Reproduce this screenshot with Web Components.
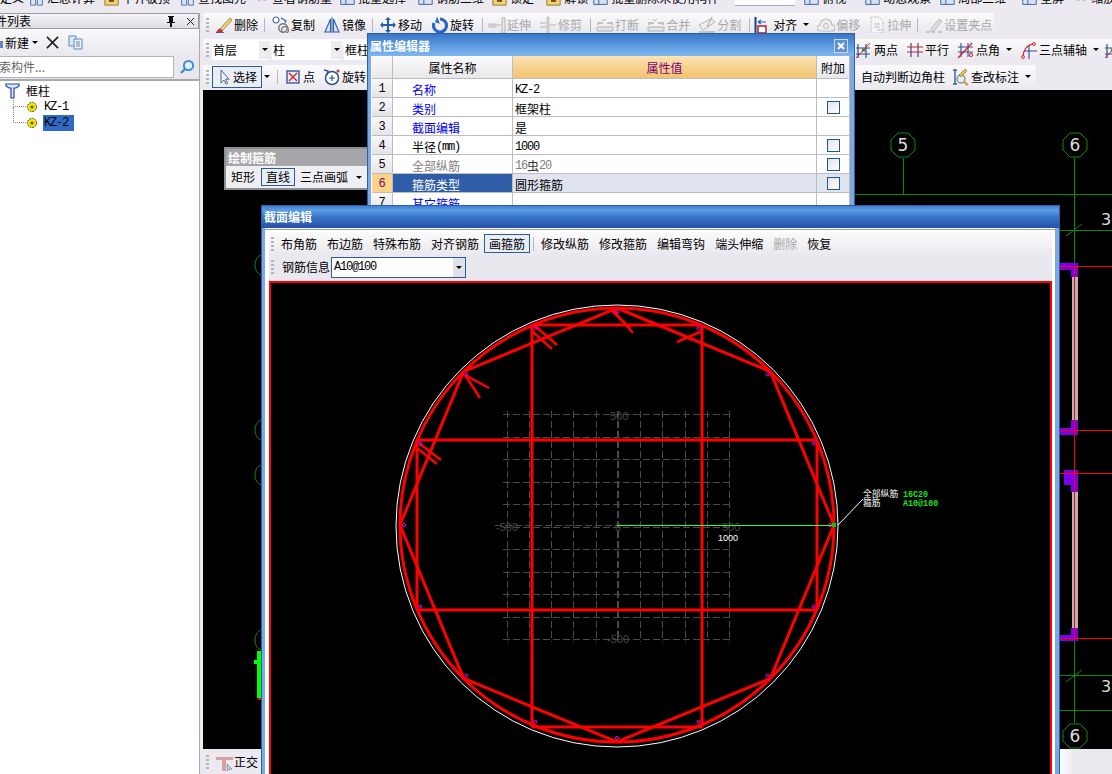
<!DOCTYPE html>
<html lang="zh">
<head>
<meta charset="utf-8">
<title>截面编辑</title>
<style>
  html, body { margin: 0; height: 100%; overflow: hidden; background: #eceaf0; }
  body { font: 12px/14px "Noto Sans CJK SC", "Liberation Sans", sans-serif; color: #000; }
</style>
</head>
<body>

<gl-app>
  <gl-menubar slot="menu"></gl-menubar>
  <gl-tree-panel slot="side"></gl-tree-panel>

  <gl-toolbar slot="tools" width="791" height="20" top="0" style="padding-top:3px">
    <gl-tool icon="brush" label="删除" style="margin-left:2px"></gl-tool>
    <gl-sep></gl-sep>
    <gl-tool icon="copy" label="复制" style="margin-left:2px"></gl-tool>
    <gl-tool icon="mirror" label="镜像" style="margin-left:5px"></gl-tool>
    <gl-sep></gl-sep>
    <gl-tool icon="move" label="移动" style="margin-left:1px"></gl-tool>
    <gl-tool icon="spin" label="旋转" style="margin-left:6px"></gl-tool>
    <gl-sep style="margin-left:6px"></gl-sep>
    <gl-tool icon="extend" label="延伸" disabled></gl-tool>
    <gl-tool icon="trim" label="修剪" disabled style="margin-left:5px"></gl-tool>
    <gl-sep style="margin-left:6px"></gl-sep>
    <gl-tool icon="brk" label="打断" disabled></gl-tool>
    <gl-tool icon="brk" label="合并" disabled style="margin-left:5px"></gl-tool>
    <gl-tool icon="split" label="分割" disabled style="margin-left:5px"></gl-tool>
    <gl-sep style="margin-left:6px"></gl-sep>
    <gl-tool icon="align" label="对齐" arrow style="margin-left:-1px"></gl-tool>
    <gl-tool icon="cloud" label="偏移" disabled style="margin-left:5px"></gl-tool>
    <gl-tool icon="doc" label="拉伸" disabled style="margin-left:5px"></gl-tool>
    <gl-sep></gl-sep>
    <gl-tool icon="pen" label="设置夹点" disabled style="margin-left:2px"></gl-tool>
  </gl-toolbar>

  <gl-toolbar slot="tools" width="909" height="21" top="6">
    <gl-combo text="首层" width="58"></gl-combo>
    <gl-combo text="柱" width="70" style="margin-left:2px"></gl-combo>
    <gl-combo text="框柱" width="80" style="margin-left:2px"></gl-combo>
    <gl-tool icon="twopt" label="两点" style="margin-left:430px"></gl-tool>
    <gl-tool icon="para" label="平行" style="margin-left:5px"></gl-tool>
    <gl-tool icon="angle" label="点角" arrow style="margin-left:5px"></gl-tool>
    <gl-tool icon="arc" label="三点辅轴" arrow style="margin-left:5px"></gl-tool>
    <gl-tool icon="twopt" style="margin-left:2px"></gl-tool>
  </gl-toolbar>

  <gl-toolbar slot="tools" width="833" height="25" top="5" style="padding-bottom:2px">
    <gl-tool icon="cursor" label="选择" active></gl-tool>
    <gl-arrow></gl-arrow>
    <gl-sep></gl-sep>
    <gl-tool icon="point" label="点" style="margin-left:1px"></gl-tool>
    <gl-tool icon="rotplus" label="旋转" style="margin-left:5px"></gl-tool>
    <gl-tool label="自动判断边角柱" style="margin-left:491px"></gl-tool>
    <gl-tool icon="lens" label="查改标注" arrow style="margin-left:4px"></gl-tool>
  </gl-toolbar>

  <gl-drawing slot="canvas"></gl-drawing>

  <gl-statusbar slot="status">
    <gl-tool icon="ortho" label="正交" style="margin-left:2px"></gl-tool>
  </gl-statusbar>

  <gl-float-bar slot="over" style="left:224px;top:147px"></gl-float-bar>

  <gl-dialog slot="over" caption="属性编辑器" closable passive style="left:367px;top:33px;width:488px;height:190px">
    <gl-prop-table></gl-prop-table>
  </gl-dialog>

  <gl-dialog slot="over" caption="截面编辑" style="left:261px;top:205px;width:799px;height:575px">
    <gl-section-editor></gl-section-editor>
  </gl-dialog>
</gl-app>

<script>
// 图标：每个都是 18x18 的内联 SVG
const ICONS = {
  brush: '<path d="M5 13 15 2l2 2L7 15z" fill="#f2d774" stroke="#8a6d2b" stroke-width=".8"/><path d="M1 17c1-3 3-5 5-4l2 2c-1 2-4 2-7 2z" fill="#c7312d"/><path d="M1 17h8" stroke="#2a4f9e" stroke-width="1.4"/>',
  copy: '<circle cx="4" cy="4" r="3" fill="#fff" stroke="#4a6a9a" stroke-width="1.2"/><circle cx="11" cy="12" r="4.2" fill="none" stroke="#777" stroke-width="1.4"/><circle cx="13" cy="14" r="3.4" fill="none" stroke="#777" stroke-width="1.2"/><path d="M9 2l5 3-1 2" fill="none" stroke="#2f62ad" stroke-width="1.2"/>',
  mirror: '<path d="M7.5 3 2 16h5.5zM10.5 3 16 16h-5.5z" fill="#d7e3f5" stroke="#2f5fa8" stroke-width="1.1"/><path d="M9 1v16" stroke="#2f5fa8"/>',
  move: '<path d="M9 1l3 3h-2v4h4V6l3 3-3 3v-2h-4v4h2l-3 3-3-3h2v-4H4v2L1 9l3-3v2h4V4H6z" fill="#2c5ca6"/>',
  spin: '<path d="M9 3a6.5 6.5 0 1 1-6 4" fill="none" stroke="#2d66c0" stroke-width="3.2"/><path d="M5 1v6h5z" fill="#2d66c0" transform="rotate(20 7 4)"/>',
  extend: '<path d="M1 8h3v3H1zM5 8h3v3H5zM9 9h4" fill="none" stroke="#b4b4b4"/><path d="M14 2h3v15h-3z" fill="#e8e8e8" stroke="#b4b4b4"/>',
  trim: '<path d="M1 7h6M1 11h6M11 9h6" stroke="#b0b0b0" fill="none"/><path d="M8 1h2v16H8z" fill="#d8d8d8" stroke="#b4b4b4" stroke-width=".7"/>',
  brk: '<path d="M2 9V7h5M11 7h5v2" fill="none" stroke="#b4b4b4" stroke-width="1.5"/><path d="M1 11h16v4H1z" fill="#e4e4e4" stroke="#b4b4b4"/><path d="M6 3l2 2 2-2" fill="none" stroke="#b4b4b4"/>',
  split: '<path d="M1 9l12-6 4 3-12 8z" fill="#eee" stroke="#b4b4b4"/><path d="M1 16h16M14 1l-5 10" stroke="#b4b4b4" fill="none" stroke-width="1.3"/>',
  align: '<path d="M1.5 1v16" stroke="#1f3f86" stroke-width="2"/><path d="M4 10h8v7H4z" fill="#fff" stroke="#b01818" stroke-width="1.4"/><path d="M4 6h8M4 6l3-2M4 6l3 2" stroke="#2a5fb8" fill="none" stroke-width="1.2"/>',
  cloud: '<path d="M3 15a3 3 0 0 1 0-6 6 6 0 0 1 12 0 3 3 0 0 1 0 6z" fill="#eee" stroke="#bbb" stroke-width="1.2"/><circle cx="9" cy="10" r="2.5" fill="none" stroke="#bbb"/>',
  doc: '<path d="M3 1h8l4 4v12H3z" fill="#f6f6f6" stroke="#bdbdbd" stroke-dasharray="2 1"/><path d="M6 8h6M6 11h6M9 14h6" stroke="#bdbdbd"/>',
  pen: '<path d="M1 16h4M7 16h3M13 16h4" stroke="#bbb" stroke-width="1.5"/><path d="M6 13 14 3l3 2-8 10-3 1z" fill="#ddd" stroke="#bbb"/>',
  twopt: '<path d="M3 3v14M11 3v14M1 7h14M1 13h14" stroke="#2f4a9a" stroke-width="1.2" fill="none"/><path d="M1 17 15 2" stroke="#e01c1c"/><rect x="7" y="7.5" width="3" height="3" fill="#5a7a10"/>',
  para: '<path d="M5 2v14M12 2v14" stroke="#2f4a9a" stroke-width="1.2"/><path d="M1 6h16M1 11h16" stroke="#d42020" stroke-width="1.2"/>',
  angle: '<path d="M4 2v14M11 2v14M1 6h15M1 11h15" stroke="#2f4a9a" stroke-width="1.1"/><path d="M1 17 15 2" stroke="#e01c1c" stroke-width="1.2"/><circle cx="14" cy="14" r="1.6" fill="none" stroke="#e01c1c"/>',
  arc: '<path d="M3 16C3 9 7 4 13 3" fill="none" stroke="#e01c1c" stroke-width="1.2"/><circle cx="3" cy="16" r="1.4" fill="#fff" stroke="#e01c1c"/><circle cx="14" cy="3" r="1.4" fill="#fff" stroke="#e01c1c"/><path d="M9 4v14M4 10h13" stroke="#2f4a9a" stroke-width="1.1"/>',
  cursor: '<path d="M6 2v13l3-3 2 4 1.6-.8-2-4H14z" fill="#eef2fa" stroke="#44557a" stroke-width=".9"/>',
  point: '<rect x="3" y="3" width="12" height="12" fill="#dfe9f7" stroke="#2a4f9e" stroke-width="1.3"/><path d="M5 5l8 8M13 5l-8 8" stroke="#d82020" stroke-width="1.3"/>',
  rotplus: '<circle cx="9" cy="10" r="6.5" fill="#fff" stroke="#2d4f8e" stroke-width="1.5"/><path d="M9 7v6M6 10h6" stroke="#2d4f8e" stroke-width="1.2"/><path d="M1 2l4 1-1 4" fill="none" stroke="#2d4f8e" stroke-width="1.4"/><circle cx="15" cy="3" r="1.5" fill="#c33"/>',
  lens: '<path d="M1 2h4M1 16h4M3 2v14" stroke="#2f5fa8" stroke-width="1.4"/><circle cx="9" cy="11" r="4" fill="#e7eef8" stroke="#8a8a8a" stroke-width="1.4"/><path d="M12 14l4 3" stroke="#c7a04a" stroke-width="2.2"/><path d="M7 7 13 1l2 2-6 6z" fill="#e2c15a" stroke="#8a6d2b" stroke-width=".6"/>',
  ortho: '<path d="M1 4h17v3h-7v11H7V7H1z" fill="#d9a0a0"/><path d="M12 11l5 5-3 .4-1.5 1.6z" fill="#c8d2e4" stroke="#5a6a8a" stroke-width=".6"/>',
  gold: '<path d="M1 1h16v16H1z" fill="#f0d070" stroke="#8a6a20"/><path d="M6 7h6v6H6z" fill="#6a4a10"/>',
  plan: '<rect x="1" y="3" width="16" height="13" fill="#d6e2f4" stroke="#2a4f9e"/><path d="M1 8h16M7 3v13" stroke="#2a4f9e"/>',
  tower: '<path d="M2 1h6v16H2zM10 1h6v16h-6z" fill="#dbe6f6" stroke="#3a5fa8"/>',
  glass: '<circle cx="6" cy="7" r="3.5" fill="none" stroke="#444" stroke-width="1.4"/><circle cx="13" cy="7" r="3.5" fill="none" stroke="#444" stroke-width="1.4"/>'
};

const iconSvg = (name, size = 18) =>
  `<svg width="${size}" height="${size}" viewBox="0 0 18 18" aria-hidden="true">${ICONS[name] || ''}</svg>`;

const GRIP = `<svg width="3" height="14" viewBox="0 0 3 14"><path d="M0 0h3v2H0zM0 4h3v2H0zM0 8h3v2H0zM0 12h3v2H0z" fill="#b5b5b8"/></svg>`;

// 整体布局
class GlApp extends HTMLElement {
  constructor() {
    super();
    this.attachShadow({ mode: 'open' });
    this.shadowRoot.innerHTML = `
      <style>
        :host { display: grid; grid-template-columns: 200px 912px; grid-template-rows: 13px 761px;
                width: 1112px; height: 774px; overflow: hidden; position: relative; background: #eceaf0; }
        .menu { grid-column: 1 / 3; overflow: hidden; }
        .main { display: flex; flex-direction: column; padding-left: 3px; min-height: 0; }
        .tools { display: flex; flex-direction: column; height: 77px; flex: none; }
        .canvas { height: 659px; flex: none; }
        .status { flex: 1; }
      </style>
      <div class="menu"><slot name="menu"></slot></div>
      <slot name="side"></slot>
      <div class="main">
        <div class="tools"><slot name="tools"></slot></div>
        <div class="canvas"><slot name="canvas"></slot></div>
        <div class="status"><slot name="status"></slot></div>
      </div>
      <slot name="over"></slot>
    `;
  }
}

// 顶部菜单条（只露出下半截）
class GlMenubar extends HTMLElement {
  constructor() {
    super();
    this.attachShadow({ mode: 'open' });
    const items = [
      [0, '', '定义'], [29, 'tower', '汇总计算'], [104, 'gold', '平齐板顶'], [180, 'tower', '查找图元'],
      [254, 'glass', '查看钢筋量'], [340, 'plan', '批量选择'], [418, 'plan', '钢筋三维'],
      [492, 'gold', '锁定'], [546, 'gold', '解锁'], [593, 'plan', '批量删除未使用构件'],
      [804, 'plan', '俯视'], [865, 'plan', '动态观察'], [940, 'plan', '局部三维'],
      [1022, 'plan', '全屏'], [1073, 'glass', '缩放']
    ];
    this.shadowRoot.innerHTML = `
      <style>
        :host { display: block; height: 13px; overflow: hidden; background: #eceaf0; }
        .row { display: flex; height: 14px; margin-top: -8px; align-items: flex-start; }
        .it { display: flex; align-items: flex-start; gap: 3px; white-space: nowrap; line-height: 12px; flex: none; }
        .it svg { margin-top: -1px; }
        .input { width: 60px; height: 13px; flex: none; background: #fff; border-bottom: 1px solid #aac; }
      </style>
      <div class="row"></div>`;
    const row = this.shadowRoot.querySelector('.row');
    let x = 0;
    items.forEach(([left, icon, label]) => {
      if (left === 804) {
        const box = document.createElement('div');
        box.className = 'input';
        box.style.marginLeft = (735 - x) + 'px';
        row.append(box);
        x = 795;
      }
      const it = document.createElement('div');
      it.className = 'it';
      it.style.marginLeft = (left - x) + 'px';
      it.innerHTML = (icon ? iconSvg(icon, 15) : '') + `<span>${label}</span>`;
      row.append(it);
      x = left + (icon ? 18 : 0) + label.length * 12;
    });
  }
}

// 左侧构件列表
class GlTreePanel extends HTMLElement {
  constructor() {
    super();
    this.attachShadow({ mode: 'open' });
    const gear = `<svg width="12" height="12" viewBox="0 0 12 12"><circle cx="6" cy="6" r="4.6" fill="#f7e400" stroke="#333" stroke-dasharray="1.6 1"/><circle cx="6" cy="6" r="1.6" fill="#6a5a00"/></svg>`;
    this.shadowRoot.innerHTML = `
      <style>
        :host { display: flex; flex-direction: column; background: #fff; border-right: 1px solid #aaa; box-sizing: border-box; width: 200px; height: 761px; overflow: hidden; }
        .title { height: 14px; flex: none; display: flex; align-items: center; background: linear-gradient(#f5f5f8, #dedde3); border: 1px solid #9c9ca0; border-left: 0; overflow: hidden; }
        .title span { margin-left: -17px; white-space: nowrap; }
        .title svg { flex: none; }
        .pin { margin-left: auto; margin-right: 10px; }
        .x { margin-right: 3px; }
        .bar { height: 25px; flex: none; display: flex; align-items: center; background: linear-gradient(#f8f8fa, #e9e8ee); margin-top: 1px; }
        .new { margin-left: -1px; }
        .caret { width: 0; height: 0; border: 3px solid transparent; border-top: 3px solid #000; border-bottom: 0; margin-left: 3px; }
        .search { height: 24px; flex: none; display: flex; align-items: center; background: #e9e8ee; border-bottom: 2px solid #a9a9ad; }
        .search .input { width: 174px; height: 22px; box-sizing: border-box; background: #fff; border: 1px solid #b4b4b8; border-left: 0; overflow: hidden; white-space: nowrap; line-height: 20px; color: #666; }
        .search .input span { margin-left: -13px; }
        .search svg { margin-left: 5px; }
        ul { list-style: none; margin: 0; padding: 1px 0 0 0; }
        li { display: flex; align-items: center; height: 16px; position: relative; white-space: nowrap; }
        .root { margin-left: 5px; height: 17px; gap: 6px; }
        .leaf { padding-left: 26px; font: 12px/16px "Liberation Mono", monospace; letter-spacing: -1.2px; }
        .leaf::before { content: ""; position: absolute; left: 13px; top: -8px; width: 12px; height: 15px; border-left: 1px dotted #888; border-bottom: 1px dotted #888; }
        .leaf span { margin-left: 5px; height: 16px; padding: 0 1px; width: 29px; }
        .sel { background: #316ac5; }
      </style>
      <div class="title">
        <span>构件列表</span>
        <svg class="pin" width="10" height="12" viewBox="0 0 10 12"><path d="M2 1h6v1H7v5h2v1H6v4H4V8H1V7h2V2H2z" fill="#111"/></svg>
        <svg class="x" width="9" height="9" viewBox="0 0 9 9"><path d="M1 1l7 7M8 1 1 8" stroke="#222"/></svg>
      </div>
      <div class="bar">
        <svg width="6" height="14" viewBox="0 0 6 14"><path d="M0 5h3v7H0z" fill="#5f86c0"/></svg>
        <span class="new">新建</span><span class="caret"></span>
        <svg style="margin-left:8px" width="13" height="13" viewBox="0 0 14 14"><path d="M1 1l12 12M13 1 1 13" stroke="#222" stroke-width="1.8"/></svg>
        <svg style="margin-left:9px" width="16" height="15" viewBox="0 0 16 15"><path d="M1 1h7v10H1z" fill="#dfe9f7" stroke="#5f86c0"/><path d="M6 4h8v10H6z" fill="#eef4fc" stroke="#5f86c0"/><path d="M8 7h4M8 9h4M8 11h4" stroke="#5f86c0"/></svg>
      </div>
      <div class="search">
        <div class="input"><span>搜索构件...</span></div>
        <svg width="16" height="16" viewBox="0 0 16 16"><circle cx="9.5" cy="6.5" r="4.6" fill="#e6f1fb" stroke="#3f8fd8" stroke-width="2"/><path d="M6 10 2 14" stroke="#3f8fd8" stroke-width="2.4"/></svg>
      </div>
      <ul>
        <li class="root"><svg width="15" height="16" viewBox="0 0 15 16"><path d="M1 1h13v2l-3 2H9v10H6V5H4L1 3z" fill="#dce8fa" stroke="#1f47a8" stroke-width="1.2"/></svg>框柱</li>
        <li class="leaf">${gear}<span>KZ-1</span></li>
        <li class="leaf">${gear}<span class="sel">KZ-2</span></li>
      </ul>`;
  }
}

// 工具条
class GlToolbar extends HTMLElement {
  constructor() {
    super();
    this.attachShadow({ mode: 'open' });
    this.shadowRoot.innerHTML = `
      <style>
        :host { display: flex; align-items: center; box-sizing: border-box; flex: none; overflow: hidden;
                padding-left: 3px; border-radius: 2px 2px 0 0; background: linear-gradient(#fbfbfc, #e9e8ee); }
        .grip { margin-right: 3px; display: flex; flex: none; }
        slot { display: contents; }
      </style>
      <span class="grip">${GRIP}</span><slot></slot>`;
  }
  connectedCallback() {
    this.style.width = this.getAttribute('width') + 'px';
    this.style.height = this.getAttribute('height') + 'px';
    this.style.marginTop = this.getAttribute('top') + 'px';
  }
}

class GlTool extends HTMLElement {
  constructor() {
    super();
    this.attachShadow({ mode: 'open' });
  }
  connectedCallback() {
    const icon = this.getAttribute('icon');
    const label = this.getAttribute('label') || '';
    const arrow = this.hasAttribute('arrow');
    this.shadowRoot.innerHTML = `
      <style>
        :host { display: inline-flex; align-items: center; gap: 2px; padding: 0 2px; flex: none; white-space: nowrap; height: 20px; }
        :host([disabled]) { color: #a8a8a8; }
        :host([active]) { border: 1px solid #2c5a9e; background: #e8edf6; box-sizing: border-box; height: 22px; padding: 0 4px 0 3px; gap: 1px; }
        svg { flex: none; margin: 0 -1px; }
        .caret { width: 0; height: 0; border: 3px solid transparent; border-top-color: #000; border-bottom: 0; margin-left: 4px; }
      </style>
      ${icon ? iconSvg(icon) : ''}${label ? `<span>${label}</span>` : ''}${arrow ? '<i class="caret"></i>' : ''}`;
  }
}

class GlArrow extends HTMLElement {
  constructor() {
    super();
    this.attachShadow({ mode: 'open' }).innerHTML = `
      <style>:host { display: block; flex: none; width: 0; height: 0; margin: 0 3px 0 2px; border: 3px solid transparent; border-top-color: #000; border-bottom: 0; }</style>`;
  }
}

class GlSep extends HTMLElement {
  constructor() {
    super();
    this.attachShadow({ mode: 'open' }).innerHTML = `
      <style>:host { display: block; flex: none; width: 1px; height: 14px; margin: 0 4px; background: #b8b8bc; }</style>`;
  }
}

class GlCombo extends HTMLElement {
  constructor() {
    super();
    this.attachShadow({ mode: 'open' });
  }
  connectedCallback() {
    this.shadowRoot.innerHTML = `
      <style>
        :host { display: flex; flex: none; align-items: center; height: 20px; background: #fff; width: ${this.getAttribute('width')}px; }
        span { flex: 1; padding-left: 1px; }
        b { width: 11px; height: 18px; background: #ecebf0; display: flex; align-items: center; justify-content: center; }
        i { width: 0; height: 0; border: 3px solid transparent; border-top-color: #000; border-bottom: 0; }
      </style>
      <span>${this.getAttribute('text')}</span><b><i></i></b>`;
  }
}

class GlStatusbar extends HTMLElement {
  constructor() {
    super();
    this.attachShadow({ mode: 'open' }).innerHTML = `
      <style>
        :host { display: flex; align-items: center; height: 25px; padding-left: 3px; background: linear-gradient(90deg, #eceaf0, #eceaf0 850px, #fbfbfc 858px, #eceaf0 870px); }
        span { display: flex; margin-right: 3px; }
      </style>
      <span>${GRIP}</span><slot></slot>`;
  }
}

// 浮动工具条：绘制箍筋
class GlFloatBar extends HTMLElement {
  constructor() {
    super();
    this.attachShadow({ mode: 'open' }).innerHTML = `
      <style>
        :host { position: absolute; display: block; width: 150px; height: 43px; box-sizing: border-box; border: 2px solid #8f8f93; border-width: 2px 0 2px 2px; background: #efeef2; }
        .cap { height: 17px; background: #a6a6aa; color: #fff; font-weight: 700; padding-left: 2px; line-height: 17px; }
        .row { display: flex; align-items: center; height: 22px; padding: 0 0 0 5px; }
        .on { border: 1px solid #2c5a9e; background: #e8edf6; padding: 0 4px; height: 18px; line-height: 16px; box-sizing: border-box; margin: 0 5px 0 6px; }
        i { width: 0; height: 0; border: 3px solid transparent; border-top-color: #000; border-bottom: 0; margin-left: 8px; }
      </style>
      <div class="cap">绘制箍筋</div>
      <div class="row"><span>矩形</span><span class="on">直线</span><span>三点画弧</span><i></i></div>`;
  }
}

// 窗口
class GlDialog extends HTMLElement {
  constructor() {
    super();
    this.attachShadow({ mode: 'open' });
  }
  connectedCallback() {
    const passive = this.hasAttribute('passive');
    const grad = passive
      ? 'linear-gradient(#3876c8, #5e9ae0 55%, #80b6ee)'
      : 'linear-gradient(#3f7fd2, #5d9be4 18%, #3677cc 50%, #2a4fa6)';
    this.shadowRoot.innerHTML = `
      <style>
        :host { position: absolute; display: flex; flex-direction: column; box-sizing: border-box;
                border: 1px solid #2d5fa8; border-width: 1px 1px 0; padding: 0 3px; background-color: #79a9e6; }
        .cap { margin: 0 -3px; height: 22px; box-sizing: border-box; padding: ${passive ? '2px' : '0'} 6px 0 2px; flex: none; display: flex; align-items: center; justify-content: space-between;
               color: #fff; font-weight: 700; background: ${grad}; }
        .close { width: 12px; height: 12px; border: 1px solid #c8d8f0; background: #5f8fd8; display: flex; }
        .body { flex: 1; min-height: 0; background: #fff; display: flex; flex-direction: column; border-right: 1px solid #8fa2c4; }
      </style>
      <div class="cap"><span>${this.getAttribute('caption')}</span>${this.hasAttribute('closable') ? `<span class="close"><svg width="12" height="12" viewBox="0 0 12 12"><path d="M3 3l6 6M9 3 3 9" stroke="#fff" stroke-width="2"/></svg></span>` : ''}</div>
      <div class="body"><slot></slot></div>`;
  }
}

// 属性表
class GlPropTable extends HTMLElement {
  constructor() {
    super();
    this.attachShadow({ mode: 'open' });
    const rows = [
      ['名称', '<span class="m">KZ-2</span>', 'link', false],
      ['类别', '框架柱', 'link', true],
      ['截面编辑', '是', 'link', false],
      ['半径<span class="m">(mm)</span>', '<span class="m">1000</span>', '', true],
      ['全部纵筋', '<span class="m">16</span><span class="zh">虫</span><span class="m">20</span>', 'mute', true],
      ['箍筋类型', '圆形箍筋', 'sel', true],
      ['其它箍筋', '', 'link', false]
    ];
    const cells = rows.map(([name, val, kind, check], i) => `
      <div class="c no ${kind === 'sel' ? 'nosel' : ''}">${i + 1}</div>
      <div class="c name ${kind}">${name}</div>
      <div class="c val ${kind === 'mute' ? 'mute' : ''} ${kind === 'sel' ? 'vsel' : ''}">${val}</div>
      <div class="c add ${kind === 'sel' ? 'vsel' : ''}">${check ? '<i></i>' : ''}</div>`).join('');
    this.shadowRoot.innerHTML = `
      <style>
        :host { display: grid; grid-template-columns: 21px 120px 304px 33px; grid-template-rows: 23px repeat(7, 19px); margin-left: 1px; }
        .c { box-sizing: border-box; border-right: 1px solid #bdbdbd; border-bottom: 1px solid #bdbdbd; padding-top: 3px; display: flex; align-items: center; white-space: nowrap; overflow: hidden; }
        .h { justify-content: center; background: linear-gradient(#fbfbfc, #e8e8ec); padding-top: 2px; }
        .hv { color: #7a007a; background: linear-gradient(#fbe4b6, #f3c26e); }
        .no { justify-content: center; padding-top: 1px; background: linear-gradient(#f8f8fa, #e4e4e8); font: 12px/14px "Liberation Mono", monospace; }
        .nosel { background: #fdd28a; color: #7a005a; }
        .name { padding-left: 19px; }
        .link { color: #0000f0; }
        .mute { color: #808080; }
        .sel { background: #315da8; color: #fff; }
        .val { padding-left: 2px; }
        .m { font: 12px/14px "Liberation Mono", monospace; letter-spacing: -1.2px; }
        .zh { color: #333; }
        .vsel { background: #dfe4f0; }
        .add { justify-content: center; padding-top: 0; }
        i { display: block; width: 11px; height: 11px; border: 1px solid #1d5a8c; background: linear-gradient(135deg, #e4e4e8, #fff); }
      </style>
      <div class="c h"></div><div class="c h">属性名称</div><div class="c h hv">属性值</div><div class="c h">附加</div>
      ${cells}`;
  }
}

// 截面编辑窗口内容
class GlSectionEditor extends HTMLElement {
  constructor() {
    super();
    this.attachShadow({ mode: 'open' });
    const names = ['布角筋', '布边筋', '特殊布筋', '对齐钢筋'];
    const after = ['修改纵筋', '修改箍筋', '编辑弯钩', '端头伸缩'];
    this.shadowRoot.innerHTML = `
      <style>
        :host { display: flex; flex-direction: column; flex: 1; min-height: 0; padding: 1px 3px 0 4px; box-sizing: border-box; }
        .line { height: 1px; background: #8fa2c4; margin: 0 -3px 2px -4px; flex: none; }
        .bar { flex: none; display: flex; align-items: center; height: 23px; padding-left: 2px; background: linear-gradient(#fbfbfc, #e9e8ee); gap: 10px; }
        .bar .grip { display: flex; margin-right: -3px; }
        .on { border: 1px solid #2c5a9e; background: #e8edf6; padding: 0 4px; height: 19px; line-height: 17px; box-sizing: border-box; margin: 0 -5px; }
        .sep { width: 1px; height: 14px; background: #b8b8bc; margin: 0 -3px 0 -2px; }
        .off { color: #a8a8a8; }
        .info { flex: none; display: flex; align-items: center; height: 26px; box-sizing: border-box; padding: 1px 0 3px 2px; background: #e9e8ee; gap: 8px; }
        .combo { width: 135px; height: 21px; margin-left: -7px; box-sizing: border-box; border: 1px solid #2c5a9e; background: #fff; display: flex; align-items: center; font: 12px "Liberation Mono", monospace; letter-spacing: -1.2px; padding-left: 2px; }
        .combo span { flex: 1; }
        .combo b { width: 12px; height: 19px; background: #dfe2ea; display: flex; align-items: center; justify-content: center; }
        .combo i { width: 0; height: 0; border: 3px solid transparent; border-top-color: #000; border-bottom: 0; }
        gl-section-view { flex: 1; min-height: 0; }
      </style>
      <div class="line"></div>
      <div class="bar">
        <span class="grip">${GRIP}</span>
        ${names.map(n => `<span>${n}</span>`).join('')}
        <span class="on">画箍筋</span><span class="sep"></span>
        ${after.map(n => `<span>${n}</span>`).join('')}
        <span class="off">删除</span><span>恢复</span>
      </div>
      <div class="info">
        <span style="display:flex">${GRIP}</span><span>钢筋信息</span>
        <div class="combo"><span>A10@100</span><b><i></i></b></div>
      </div>
      <gl-section-view></gl-section-view>`;
  }
}

// 圆柱截面配筋图，坐标直接用屏幕坐标
class GlSectionView extends HTMLElement {
  constructor() {
    super();
    this.attachShadow({ mode: 'open' });
    const cx = 617, cy = 525;
    const pt = (r, deg) => {
      const a = deg * Math.PI / 180;
      return [(cx + r * Math.sin(a)).toFixed(1), (cy - r * Math.cos(a)).toFixed(1)];
    };
    const ring = (r, step, from) => {
      const out = [];
      for (let d = from; d < 360; d += step) out.push(pt(r, d).join(','));
      return out.join(' ');
    };

    // 虚线网格
    let grid = '';
    for (let i = 0; i <= 10; i++) {
      const x = Math.round(506.7 + i * 22.23) + .5;
      const y = Math.round(414 + i * 22.5) + .5;
      grid += `<path d="M${x} 411V642M503 ${y}H733"/>`;
    }

    // 纵筋小圆点
    let dots = '';
    for (let d = 0; d < 360; d += 22.5) {
      const [x, y] = pt(213, d);
      dots += `<circle cx="${x}" cy="${y}" r="1.5"/>`;
    }

    this.shadowRoot.innerHTML = `
      <style>
        :host { display: block; box-sizing: border-box; border: 2px solid #f00; background: #000; overflow: hidden; }
        svg { display: block; }
        text { font-family: "Liberation Sans", "Noto Sans CJK SC", sans-serif; }
      </style>
      <svg width="779" height="489" viewBox="271 283 779 489">
        <g fill="none" stroke="#4a4a4a" stroke-dasharray="7 3">${grid}<path d="M495 525.5H740M617.5 411V642"/></g>
        <g fill="#474747" font-size="11">
          <text x="610" y="420">500</text>
          <text x="496" y="531">-500</text>
          <text x="615" y="531">0</text>
          <text x="722" y="531">500</text>
          <text x="607" y="643">-500</text>
        </g>
        <circle cx="${cx}" cy="526" r="221" fill="none" stroke="#fff" stroke-width="1"/>
        <g fill="none" stroke="#f00" stroke-width="3">
          <circle cx="${cx}" cy="${cy}" r="217"/>
          <polygon points="${ring(217, 45, 0)}"/>
          <path d="M532 325V727M702 325V727M417 440V610M817 440V610M532 325H702M532 727H702M417 440H817M417 610H817"/>
        </g>
        <g fill="none" stroke="#f00" stroke-width="2.5">
          <path d="M535 326 557 345M532 331 552 349"/>
          <path d="M465 375 489 388M465 375 480 398"/>
          <path d="M420 444 441 460M417 448 437 464"/>
          <path d="M613 310 633 333M612 311 630 328"/>
          <path d="M702 331 677 342M682 335 692 340"/>
        </g>
        <g fill="none" stroke="#f0f" stroke-width="1">${dots}</g>
        <path d="M617 525.5H836" stroke="#2fff2f" stroke-width="1"/>
        <rect x="832" y="523" width="4" height="4" fill="#0c0"/>
        <path d="M838 525 863 499" stroke="#fff" stroke-width="1"/>
        <text x="718" y="541" fill="#fff" font-size="9">1000</text>
        <g font-size="8.8" fill="#fff">
          <text x="863" y="497">全部纵筋</text>
          <text x="863" y="506">箍筋</text>
        </g>
        <g font-size="8.4" fill="#1fe01f" font-weight="700">
          <text x="903" y="497" style="font-family:'Liberation Mono',monospace">16C20</text>
          <text x="903" y="506" style="font-family:'Liberation Mono',monospace">A10@100</text>
        </g>
      </svg>`;
  }
}

// 黑色绘图区：轴网和柱
class GlDrawing extends HTMLElement {
  constructor() {
    super();
    this.attachShadow({ mode: 'open' });
    const bubble = (x, y, n) => `
      <polygon points="${[0, 1, 2, 3, 4, 5, 6, 7].map(i => {
        const a = (i + .5) * Math.PI / 4;
        return (x + 13 * Math.sin(a)).toFixed(1) + ',' + (y - 13 * Math.cos(a)).toFixed(1);
      }).join(' ')}" fill="#000" stroke="#0a8a0a"/>
      <text x="${x}" y="${y + 6}" fill="#ddd" font-size="17" text-anchor="middle">${n}</text>`;
    this.shadowRoot.innerHTML = `
      <style>
        :host { display: block; height: 659px; background: #000; overflow: hidden; }
        svg { display: block; }
        text { font-family: "DejaVu Sans", sans-serif; }
      </style>
      <svg width="909" height="659" viewBox="203 90 909 659">
        <g stroke="#0a8a0a" fill="none">
          <path d="M903.5 158V194M1074.5 158V723M855 194.5H1112M1060 230.5H1112M1060 675.5H1112M1060 710.5H1112"/>
          <path d="M1066 236 1082 224M1066 682 1082 670"/>
          <path d="M261 255a8 10 0 0 0-6 10 8 10 0 0 0 6 10M261 420a8 10 0 0 0-6 10 8 10 0 0 0 6 10M261 465a8 10 0 0 0-6 10 8 10 0 0 0 6 10M261 630a8 10 0 0 0-6 10 8 10 0 0 0 6 10"/>
        </g>
        ${bubble(903, 145, 5)}${bubble(1075, 145, 6)}${bubble(1075, 736, 6)}
        <text x="1101" y="225" fill="#ddd" font-size="16">3</text>
        <text x="1101" y="692" fill="#ddd" font-size="16">3</text>
        <path d="M1075 270V430M1075 475V630" stroke="#b4b4b4" stroke-width="6"/>
        <path d="M1060 263H1078V277H1071V270H1060zM1071 420H1078V435H1060V428H1071zM1064 470H1078V492H1071V485H1064zM1071 628H1078V641H1060V635H1071z" fill="#7a00e8"/>
        <path d="M1060 266.5H1112M1060 430.5H1112M1060 473.5H1112M1060 638.5H1112M1074.5 266V638" stroke="#f00" stroke-width="1"/>
        <path d="M257 651h4v47h-4zM254 660h3v4h-3z" fill="#00ff00"/>
        <path d="M258 698h3v2h-3z" fill="#f00"/>
      </svg>`;
  }
}

customElements.define('gl-app', GlApp);
customElements.define('gl-menubar', GlMenubar);
customElements.define('gl-tree-panel', GlTreePanel);
customElements.define('gl-toolbar', GlToolbar);
customElements.define('gl-tool', GlTool);
customElements.define('gl-arrow', GlArrow);
customElements.define('gl-sep', GlSep);
customElements.define('gl-combo', GlCombo);
customElements.define('gl-statusbar', GlStatusbar);
customElements.define('gl-float-bar', GlFloatBar);
customElements.define('gl-dialog', GlDialog);
customElements.define('gl-prop-table', GlPropTable);
customElements.define('gl-section-view', GlSectionView);
customElements.define('gl-section-editor', GlSectionEditor);
customElements.define('gl-drawing', GlDrawing);
</script>
</body>
</html>
